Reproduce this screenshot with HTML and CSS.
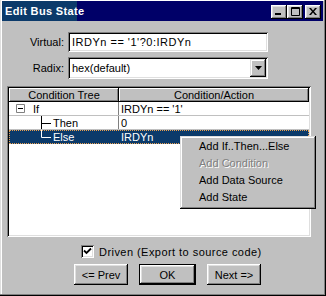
FILE: index.html
```html
<!DOCTYPE html>
<html>
<head>
<meta charset="utf-8">
<link rel="stylesheet" href="styles.css">
</head>
<body>
<div class="window">
  <div class="titlebar">
    <span class="title">Edit Bus State</span>
    <div class="tbtns">
      <span class="tbtn"><svg width="8" height="7" viewBox="0 0 8 7"><rect x="0" y="5" width="6" height="2" fill="#000"/></svg></span>
      <span class="tbtn"><svg width="9" height="9" viewBox="0 0 9 9"><path d="M0.5 0.5H8.5V8.5H0.5Z M0.5 1.5H8.5" fill="none" stroke="#000"/></svg></span>
      <span class="tbtn close"><svg width="8" height="7" viewBox="0 0 8 7"><path d="M0 0h2l2 2.5L6 0h2L5 3.5 8 7H6L4 4.5 2 7H0l3-3.5z" fill="#000"/></svg></span>
    </div>
  </div>
  <div class="body">
    <div class="form">
      <span class="lbl">Virtual:</span>
      <div class="field input"><span class="input-text">IRDYn == '1'?0:IRDYn</span></div>
      <span class="lbl">Radix:</span>
      <div class="field combo">
        <span class="combo-text">hex(default)</span>
        <span class="ddbtn"><svg width="7" height="4" viewBox="0 0 7 4"><path d="M0 0H7L3.5 4Z" fill="#000"/></svg></span>
      </div>
    </div>
    <div class="list">
      <div class="list-inner">
        <div class="row head">
          <div class="cell c1 hcell">Condition Tree</div>
          <div class="cell c2 hcell">Condition/Action</div>
          <div class="hfill"></div>
        </div>
        <div class="row">
          <div class="cell c1"><span class="expander"><svg width="9" height="9" viewBox="0 0 9 9"><path d="M0.5 0.5H8.5V8.5H0.5Z" fill="#fff" stroke="#808080"/><path d="M2 4.5H7" stroke="#000"/></svg></span><span class="node">If</span></div>
          <div class="cell c2">IRDYn == '1'</div>
        </div>
        <div class="row">
          <div class="cell c1 child"><svg class="branch" width="11" height="14" viewBox="0 0 11 14"><path d="M0.5 0V14M0.5 7.5H10" stroke="currentColor"/></svg><span class="node">Then</span></div>
          <div class="cell c2">0</div>
        </div>
        <div class="row selected">
          <div class="cell c1 child"><svg class="branch" width="11" height="14" viewBox="0 0 11 14"><path d="M0.5 0V7.5M0.5 7.5H10" stroke="currentColor"/></svg><span class="node">Else</span></div>
          <div class="cell c2">IRDYn</div>
        </div>
      </div>
      <div class="menu">
        <div class="mi">Add If..Then...Else</div>
        <div class="mi disabled">Add Condition</div>
        <div class="mi">Add Data Source</div>
        <div class="mi">Add State</div>
      </div>
    </div>
    <div class="check-row">
      <span class="checkbox"><svg width="9" height="9" viewBox="0 0 9 9"><path d="M1 3.5L3.5 6L8 1.5" fill="none" stroke="#000" stroke-width="1.8"/></svg></span>
      <span class="check-label">Driven (Export to source code)</span>
    </div>
    <div class="btn-row">
      <span class="btn">&lt;= Prev</span>
      <span class="btn default"><span class="btn-in">OK</span></span>
      <span class="btn">Next =&gt;</span>
    </div>
  </div>
</div>
</body>
</html>
```

FILE: styles.css
```css
* { box-sizing: border-box; }
html, body { margin: 0; padding: 0; }
body {
  font-family: "Liberation Sans", Arial, sans-serif;
  font-size: 11px;
  color: #000;
  background: #c0c0c0;
}
.window {
  width: 326px;
  height: 296px;
  background: #c0c0c0;
  padding: 1px 3px 3px 2px;
  box-shadow: inset -1px -1px #000, inset -2px -2px #808080, inset 1px 0 #dfdfdf, inset 2px 1px #fff;
  display: flex;
  flex-direction: column;
}
.titlebar {
  height: 20px;
  background: linear-gradient(to right, #0b3a6a 0, #0b3a6a 75px, #000068 75px);
  display: flex;
  align-items: center;
  justify-content: space-between;
  padding: 0 2px 0 3px;
}
.title {
  color: #fff;
  font-weight: bold;
  font-size: 11px;
  letter-spacing: 0.35px;
}
.tbtns {
  display: flex;
  align-items: center;
  margin-top: 1px;
}
.tbtn {
  width: 16px;
  height: 14px;
  background: #c0c0c0;
  box-shadow: inset -1px -1px #000, inset 1px 1px #fff, inset -2px -2px #808080, inset 2px 2px #dfdfdf;
  display: flex;
  align-items: center;
  justify-content: center;
}
.tbtn.close { margin-left: 2px; }
.body {
  flex: 1;
  padding: 0 0 0 5px;
  display: flex;
  flex-direction: column;
}
.form {
  margin-top: 11px;
  display: grid;
  grid-template-columns: 57px 200px;
  column-gap: 4px;
  row-gap: 5px;
  align-items: center;
}
.lbl {
  text-align: right;
}
.field {
  background: #fff;
  box-shadow: inset 1px 1px #808080, inset -1px -1px #fff, inset 2px 2px #000, inset -2px -2px #dfdfdf;
  padding: 0 2px 0 4px;
  display: flex;
  align-items: center;
}
.input { height: 20px; }
.input-text { letter-spacing: 0.5px; }
.combo {
  height: 22px;
  justify-content: space-between;
  padding-right: 2px;
}
.ddbtn {
  width: 16px;
  height: 18px;
  background: #c0c0c0;
  box-shadow: inset -1px -1px #000, inset 1px 1px #dfdfdf, inset -2px -2px #808080, inset 2px 2px #fff;
  display: flex;
  align-items: center;
  justify-content: center;
}
.list {
  position: relative;
  margin-top: 7px;
  width: 304px;
  height: 151px;
  padding: 2px;
  background: #fff;
  box-shadow: inset 1px 1px #808080, inset -1px -1px #fff, inset 2px 2px #000, inset -2px -2px #dfdfdf;
}
.list-inner {
  height: 100%;
  background: #fff;
}
.row {
  display: flex;
  height: 14px;
  border-bottom: 1px solid #c0c0c0;
}
.row.head {
  height: 14px;
  border-bottom: 0;
  background: #c0c0c0;
}
.cell {
  display: flex;
  align-items: center;
  white-space: nowrap;
  overflow: hidden;
}
.c1 { width: 110px; border-right: 1px solid #808080; padding-left: 7px; }
.c2 { width: 190px; padding-left: 2px; }
.hcell {
  justify-content: center;
  padding-left: 0;
  border-right: 0;
  box-shadow: inset -1px -1px #000, inset 1px 1px #fff, inset -2px -2px #808080;
}
.hfill { flex: 1; }
.expander {
  display: flex;
  width: 9px;
  height: 9px;
  margin-right: 8px;
}
.expander svg { display: block; }
.child { padding-left: 32px; }
.branch { display: block; color: #000; margin-right: 1px; }
.row.selected {
  background: #0b3a6a;
  color: #fff;
  outline: 1px dotted #e8a050;
  outline-offset: -1px;
  border-bottom: 0;
  height: 14px;
}
.row.selected .branch { color: #fff; }
.row.selected .c1 { border-right-color: #0b3a6a; }
.menu {
  position: absolute;
  left: 173px;
  top: 50px;
  width: 136px;
  height: 73px;
  background: #c0c0c0;
  padding: 2px;
  box-shadow: inset -1px -1px #000, inset 1px 1px #dfdfdf, inset -2px -2px #808080, inset 2px 2px #fff;
}
.mi {
  height: 17px;
  line-height: 17px;
  padding-left: 17px;
  white-space: nowrap;
}
.mi.disabled {
  color: #808080;
  text-shadow: 1px 1px #fff;
}
.check-row {
  margin-top: 8px;
  display: flex;
  align-items: center;
  padding-left: 74px;
  height: 13px;
}
.checkbox {
  width: 13px;
  height: 13px;
  background: #fff;
  box-shadow: inset 1px 1px #808080, inset -1px -1px #fff, inset 2px 2px #000, inset -2px -2px #dfdfdf;
  display: flex;
  align-items: center;
  justify-content: center;
  margin-right: 5px;
}
.checkbox svg { display: block; }
.check-label { letter-spacing: 0.45px; }
.btn-row {
  margin-top: 6px;
  display: flex;
  padding-left: 67px;
  gap: 11px;
}
.btn {
  width: 54px;
  height: 21px;
  background: #c0c0c0;
  box-shadow: inset -1px -1px #000, inset 1px 1px #fff, inset -2px -2px #808080, inset 2px 2px #dfdfdf;
  display: flex;
  align-items: center;
  justify-content: center;
}
.btn.default {
  width: 57px;
  padding: 1px;
  box-shadow: inset 0 0 0 1px #000;
}
.btn-in {
  width: 100%;
  height: 100%;
  display: flex;
  align-items: center;
  justify-content: center;
  box-shadow: inset -1px -1px #000, inset 1px 1px #fff, inset -2px -2px #808080, inset 2px 2px #dfdfdf;
}
```
